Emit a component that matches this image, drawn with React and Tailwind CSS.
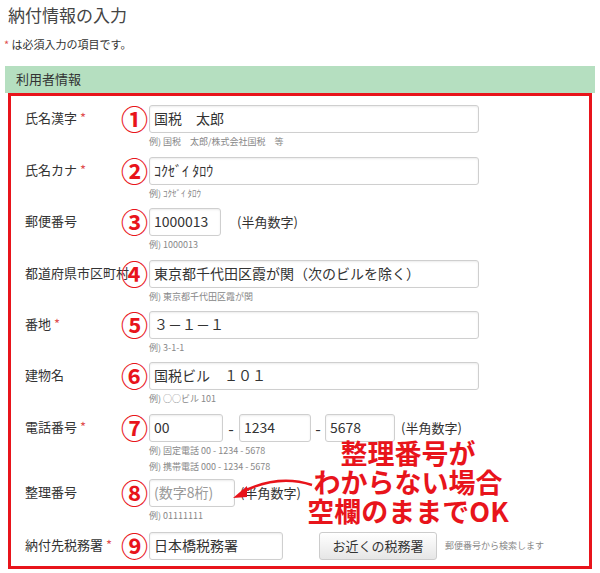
const F = { fontFamily: '"Noto Sans CJK JP","Noto Sans",sans-serif' };

function Circ({ n }) {
  return (
    <div className="w-[29px] h-[28px] flex items-center justify-center text-[#e8141b] text-[27px] font-bold leading-none shrink-0">{n}</div>
  );
}
function Input({ w, v, ph }) {
  return (
    <div className={`h-[28px] border border-[#cfcfcf] rounded-[3px] bg-white px-[4px] flex items-center text-[14px] whitespace-nowrap ${ph ? 'text-[#999]' : 'text-[#333]'} shadow-[inset_0_1px_2px_rgba(0,0,0,0.08)]`} style={{ width: w }}>{v}</div>
  );
}
function Row({ label, req, n, h, children, hints = [] }) {
  return (
    <div className="flex" style={{ height: h }}>
      <div className="w-[109px] pl-[14px] pt-[3px] text-[13px] text-[#333] whitespace-nowrap">
        {label}{req && <span className="text-[#e05050] ml-[3px]">*</span>}
      </div>
      <div className="flex flex-col">
        <div className="flex items-center">
          <Circ n={n} />
          {children}
        </div>
        {hints.map((t, i) => (
          <div key={i} className="ml-[29px] mt-[2px] text-[9px] text-[#888] leading-[14px]">{t}</div>
        ))}
      </div>
    </div>
  );
}

export default function App() {
  return (
    <div className="w-[600px] h-[573px] bg-white relative overflow-hidden" style={F}>
      <div className="pl-[8px] pt-[4px] text-[17px] text-[#444] leading-[22px]">納付情報の入力</div>
      <div className="pl-[4px] mt-[10px] text-[11px] text-[#333]"><span className="text-[#e05050]">*</span> は必須入力の項目です。</div>
      <div className="mx-[5px] mt-[13px] h-[27px] bg-[#b5dfc0] flex items-center pl-[11px] text-[13px] text-[#333]">利用者情報</div>
      <div className="mx-[8px] h-[476px] border-[3px] border-[#e8141b] pt-[9px]">
        <Row label="氏名漢字" req n="①" h={52} hints={["例) 国税　太郎/株式会社国税　等"]}><Input w={330} v="国税　太郎" /></Row>
        <Row label="氏名カナ" req n="②" h={51} hints={["例) ｺｸｾﾞｲ ﾀﾛｳ"]}><Input w={330} v="ｺｸｾﾞｲ ﾀﾛｳ" /></Row>
        <Row label="郵便番号" n="③" h={52} hints={["例) 1000013"]}>
          <Input w={72} v="1000013" /><span className="ml-[16px] text-[13px] text-[#333]">(半角数字)</span>
        </Row>
        <Row label="都道府県市区町村" n="④" h={51} hints={["例) 東京都千代田区霞が関"]}><Input w={330} v="東京都千代田区霞が関（次のビルを除く）" /></Row>
        <Row label="番地" req n="⑤" h={51} hints={["例) 3-1-1"]}><Input w={330} v="３－１－１" /></Row>
        <Row label="建物名" n="⑥" h={52} hints={["例) ○○ビル 101"]}><Input w={330} v="国税ビル　１０１" /></Row>
        <Row label="電話番号" req n="⑦" h={65} hints={["例) 固定電話 00 - 1234 - 5678", "例) 携帯電話 000 - 1234 - 5678"]}>
          <Input w={74} v="00" /><span className="w-[16px] text-center text-[#333]">-</span>
          <Input w={72} v="1234" /><span className="w-[14px] text-center text-[#333]">-</span>
          <Input w={70} v="5678" /><span className="ml-[6px] text-[13px] text-[#333]">(半角数字)</span>
        </Row>
        <Row label="整理番号" n="⑧" h={53} hints={["例) 01111111"]}>
          <Input w={86} v="(数字8桁)" ph /><span className="ml-[5px] text-[13px] text-[#333]">(半角数字)</span>
        </Row>
        <Row label="納付先税務署" req n="⑨" h={30}>
          <Input w={134} v="日本橋税務署" />
          <div className="ml-[36px] w-[118px] h-[28px] border border-[#ccc] rounded-[3px] bg-gradient-to-b from-white to-[#e6e6e6] flex items-center justify-center text-[13px] text-[#333]">お近くの税務署</div>
          <span className="ml-[8px] text-[9px] text-[#888]">郵便番号から検索します</span>
        </Row>
      </div>
      <div className="absolute left-[288px] top-[438px] w-[240px] text-center text-[#e8141b] font-bold text-[27px] leading-[29px]">
        整理番号が<br />わからない場合<br />空欄のままでOK
      </div>
      <svg className="absolute left-[228px] top-[476px]" width="90" height="30" viewBox="0 0 90 30">
        <path d="M84 9 Q50 -2 14 16" fill="none" stroke="#e8141b" strokeWidth="2.5" />
        <path d="M5 22 L19 10 L19 21 Z" fill="#e8141b" />
      </svg>
    </div>
  );
}
